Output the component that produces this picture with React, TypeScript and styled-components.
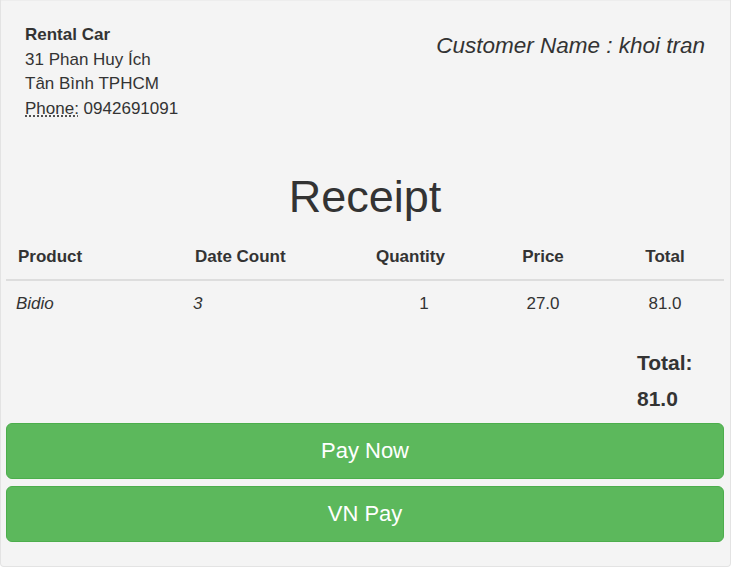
import React from "react";
import styled, { createGlobalStyle } from "styled-components";

const GlobalStyle = createGlobalStyle`
  body {
    margin: 0;
    background: #fff;
    font-family: "Liberation Sans", Arial, Helvetica, sans-serif;
    color: #333;
  }
`;

const Well = styled.div`
  box-sizing: border-box;
  width: 731px;
  padding: 0 6px 24px 5px;
  background: #f4f4f4;
  border: 1px solid #e3e3e3;
  border-top: none;
  border-radius: 0 0 4px 4px;
  box-shadow: inset 0 1px 1px rgba(0, 0, 0, 0.03);
  display: flex;
  flex-direction: column;
`;

const Header = styled.div`
  display: flex;
  justify-content: space-between;
  align-items: flex-start;
  padding: 23px 19px 0 19px;
`;

const Address = styled.address`
  font-style: normal;
  font-size: 17px;
  line-height: 24.7px;
  margin: 0;

  strong {
    font-weight: bold;
  }

  abbr {
    text-decoration: underline dotted;
    text-underline-offset: 2px;
    cursor: help;
  }
`;

const Customer = styled.div`
  margin-top: 11px;
  font-size: 22.5px;
  font-style: italic;
  line-height: 24px;
`;

const Title = styled.h1`
  margin: 50px 0 15px;
  text-align: center;
  font-size: 45px;
  font-weight: normal;
  line-height: 49.5px;
`;

const Table = styled.div`
  display: grid;
  grid-template-columns: 177px 185px 112px 126px 1fr;
  font-size: 17px;
  line-height: 24px;
`;

const HeadCell = styled.div<{ $align?: string }>`
  padding: 9px 12px 10px;
  font-weight: bold;
  text-align: ${(p) => p.$align || "left"};
  border-bottom: 2px solid #ddd;
`;

const QtyHead = styled(HeadCell)`
  padding-left: 8px;
`;

const BodyCell = styled.div<{ $align?: string; $italic?: boolean }>`
  padding: 11px 10px 8px;
  text-align: ${(p) => p.$align || "left"};
  font-style: ${(p) => (p.$italic ? "italic" : "normal")};
`;

const TotalBox = styled.div`
  align-self: flex-end;
  width: 87px;
  margin-top: 21px;
  font-size: 21px;
  font-weight: bold;
  line-height: 36px;
`;

const PayButton = styled.button`
  box-sizing: border-box;
  width: 100%;
  height: 56px;
  margin-top: 7px;
  background: #5cb85c;
  border: 1px solid #4cae4c;
  border-radius: 6px;
  color: #fff;
  font-family: "Liberation Sans", Arial, Helvetica, sans-serif;
  font-size: 22px;
  cursor: pointer;

  &:first-of-type {
    margin-top: 6px;
  }
`;

const items = [{ name: "Bidio", days: 3, qty: 1, price: 27.0 }];

export default function App() {
  const total = items.reduce((s, i) => s + i.days * i.qty * i.price, 0);

  return (
    <>
      <GlobalStyle />
      <Well>
        <Header>
          <Address>
            <strong>Rental Car</strong>
            <br />
            31 Phan Huy Ích
            <br />
            Tân Bình TPHCM
            <br />
            <abbr title="Phone">Phone:</abbr> 0942691091
          </Address>
          <Customer>Customer Name : khoi tran</Customer>
        </Header>

        <Title>Receipt</Title>

        <Table>
          <HeadCell>Product</HeadCell>
          <HeadCell>Date Count</HeadCell>
          <QtyHead>Quantity</QtyHead>
          <HeadCell $align="center">Price</HeadCell>
          <HeadCell $align="center">Total</HeadCell>
          {items.map((item) => (
            <React.Fragment key={item.name}>
              <BodyCell $italic>{item.name}</BodyCell>
              <BodyCell $italic>{item.days}</BodyCell>
              <BodyCell $align="center">{item.qty}</BodyCell>
              <BodyCell $align="center">{item.price.toFixed(1)}</BodyCell>
              <BodyCell $align="center">
                {(item.days * item.qty * item.price).toFixed(1)}
              </BodyCell>
            </React.Fragment>
          ))}
        </Table>

        <TotalBox>
          Total:
          <br />
          {total.toFixed(1)}
        </TotalBox>

        <PayButton>Pay Now</PayButton>
        <PayButton>VN Pay</PayButton>
      </Well>
    </>
  );
}
